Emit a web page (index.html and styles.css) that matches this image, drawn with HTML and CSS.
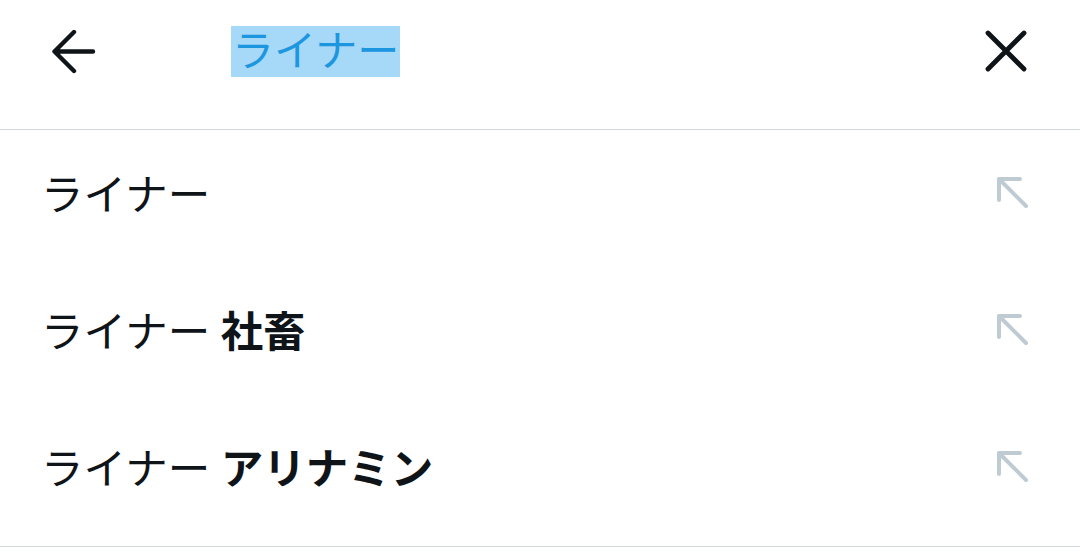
FILE: index.html
```html
<!DOCTYPE html>
<html lang="ja">
<head>
    <meta charset="UTF-8">
    <title>検索</title>
    <link rel="stylesheet" href="styles.css">
</head>
<body>
    <div class="search-header">
        <div class="search-bar">
            <button class="icon-btn back-btn" aria-label="戻る">
                <svg width="44" height="44" viewBox="0 0 44 44">
                    <path d="M41 21.5H3M22 2L2.5 21.5L22 41" fill="none" stroke="#0f1419" stroke-width="4.4" stroke-linecap="round" stroke-linejoin="round"/>
                </svg>
            </button>
            <div class="search-query"><span class="selected">ライナー</span></div>
            <button class="icon-btn clear-btn" aria-label="クリア">
                <svg width="44" height="44" viewBox="0 0 44 44">
                    <path d="M4 3L40 39M40 3L4 39" fill="none" stroke="#0f1419" stroke-width="4.8" stroke-linecap="round"/>
                </svg>
            </button>
        </div>
    </div>

    <ul class="suggest-list">
        <li class="suggest-item">
            <span class="suggest-text">ライナー</span>
            <svg class="fill-icon" width="34" height="34" viewBox="0 0 34 34">
                <path d="M3 24V3H24M3 3L30 30" fill="none" stroke="#bfcbd3" stroke-width="4" stroke-linecap="round" stroke-linejoin="round"/>
            </svg>
        </li>
        <li class="suggest-item">
            <span class="suggest-text">ライナー <b>社畜</b></span>
            <svg class="fill-icon" width="34" height="34" viewBox="0 0 34 34">
                <path d="M3 24V3H24M3 3L30 30" fill="none" stroke="#bfcbd3" stroke-width="4" stroke-linecap="round" stroke-linejoin="round"/>
            </svg>
        </li>
        <li class="suggest-item">
            <span class="suggest-text">ライナー <b>アリナミン</b></span>
            <svg class="fill-icon" width="34" height="34" viewBox="0 0 34 34">
                <path d="M3 24V3H24M3 3L30 30" fill="none" stroke="#bfcbd3" stroke-width="4" stroke-linecap="round" stroke-linejoin="round"/>
            </svg>
        </li>
    </ul>
</body>
</html>
```

FILE: styles.css
```css
body {
    margin: 0;
    background: #fff;
    color: #0f1419;
    font-family: Roboto, "Noto Sans CJK JP", sans-serif;
}

.search-header {
    height: 129px;
    border-bottom: 1px solid #d4d9dd;
}

.search-bar {
    height: 103px;
    display: flex;
    align-items: center;
    padding: 0 52px 0 52px;
}

.icon-btn {
    background: none;
    border: none;
    padding: 0;
    width: 44px;
    height: 44px;
    display: flex;
}

.search-query {
    flex: 1;
    margin-left: 135px;
    font-size: 42px;
    color: #1d96e0;
}

.selected {
    display: inline-block;
    height: 51px;
    line-height: 51px;
    background: #a6d8f8;
    padding: 0 1px;
}

.suggest-list {
    list-style: none;
    margin: 0;
    padding: 0 0 5px;
    border-bottom: 1px solid #d4d9dd;
    width: 1080px;
}

.suggest-item {
    height: 137px;
    display: flex;
    align-items: center;
    justify-content: space-between;
    padding: 0 50px 0 41px;
}

.suggest-text {
    font-size: 42.5px;
    margin-top: -15px;
}

.suggest-text b {
    font-weight: bold;
}

.fill-icon {
    margin-top: -11px;
}
```
